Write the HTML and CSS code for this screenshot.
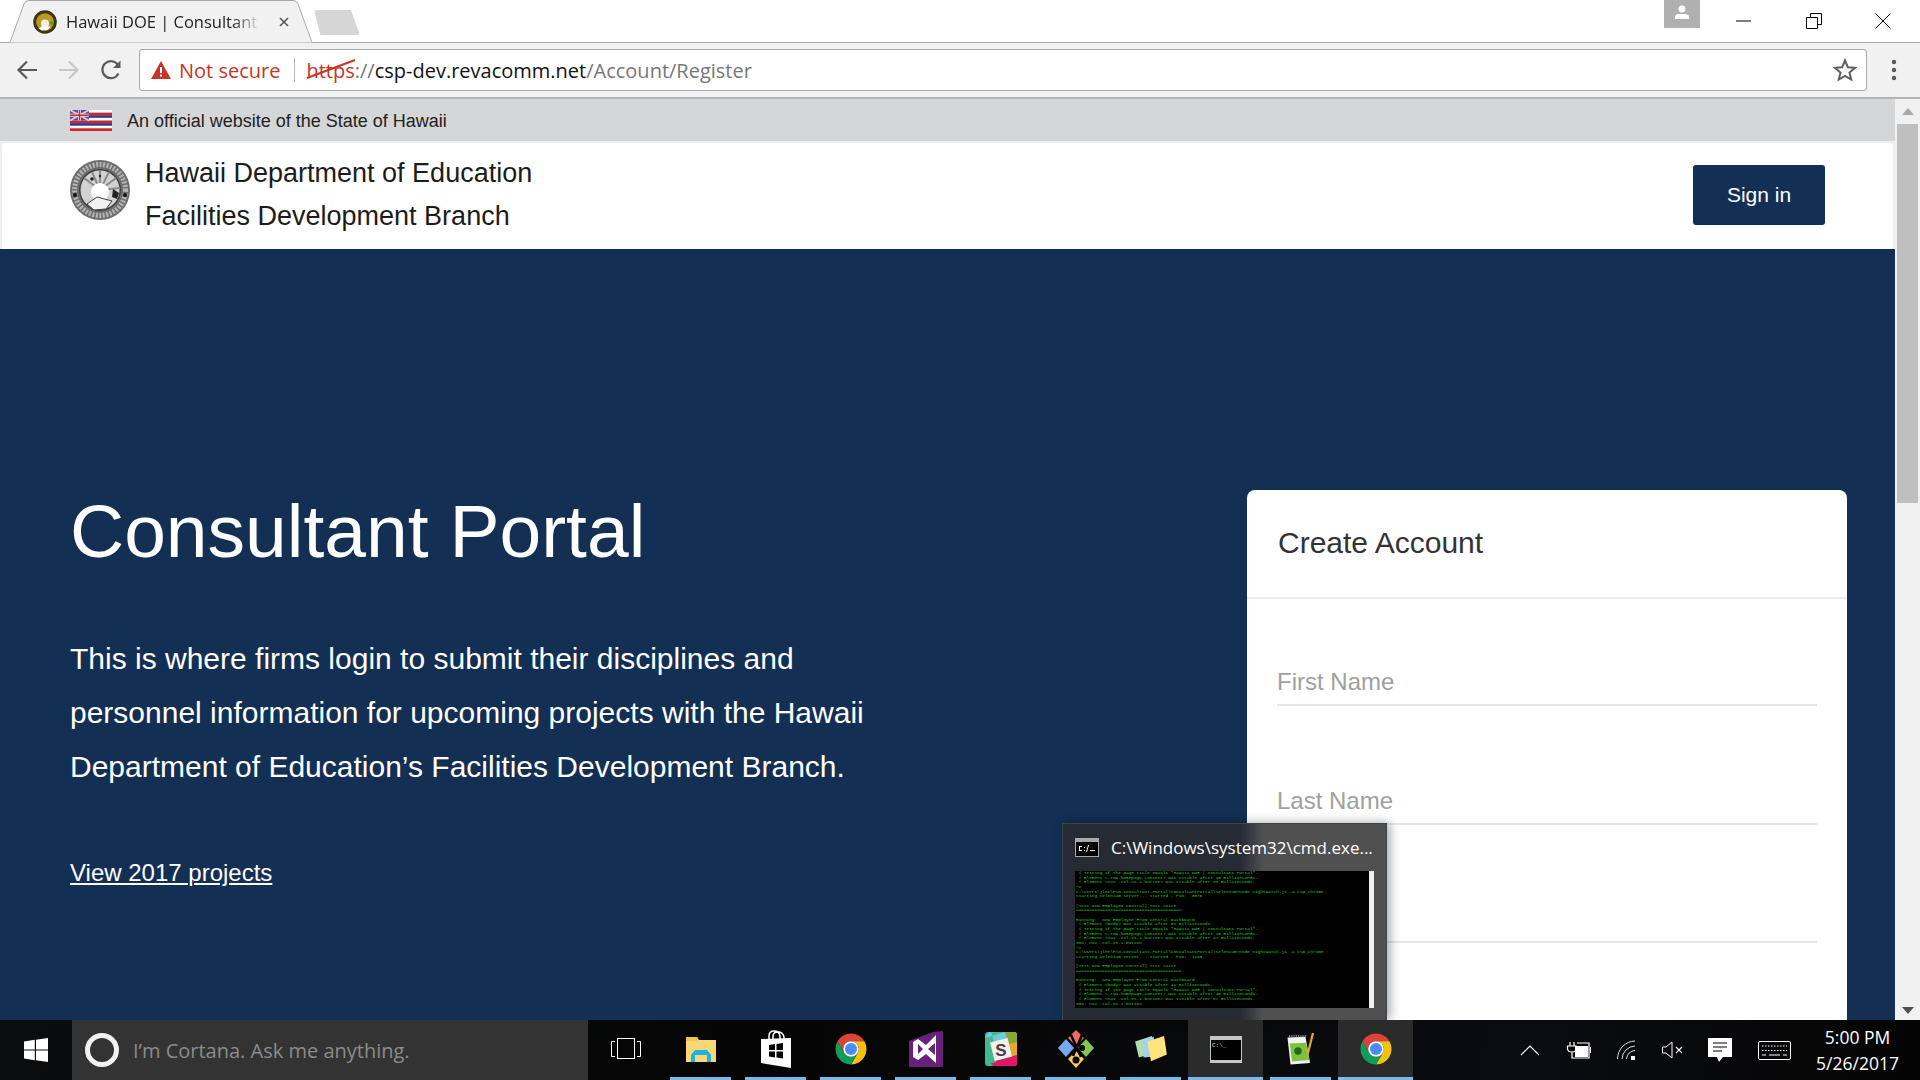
FILE: index.html
```html
<!DOCTYPE html>
<html lang="en">
<head>
    <meta charset="UTF-8">
    <title>Hawaii DOE | Consultant Portal</title>
    <link rel="stylesheet" href="styles.css">
</head>
<body>

	<svg class="defs">
		<symbol id="chrome-logo" viewBox="0 0 48 48">
			<path fill="#db4437" d="M5 13A22 22 0 0 1 43 13H24A11 11 0 0 0 14.5 29.5Z"/>
			<path fill="#f4c20d" d="M43 13A22 22 0 0 1 24 46L33.5 29.5A11 11 0 0 0 24 13Z"/>
			<path fill="#0f9d58" d="M24 46A22 22 0 0 1 5 13L14.5 29.5A11 11 0 0 0 33.5 29.5Z"/>
			<circle cx="24" cy="24" r="11" fill="#fff"/>
			<circle cx="24" cy="24" r="8.5" fill="#4a8bf5"/>
		</symbol>
		<symbol id="seal" viewBox="0 0 60 60">
			<circle cx="30" cy="30" r="30" fill="#6e6e6e"/>
			<circle cx="30" cy="30" r="25.500" fill="none" stroke="#b5b5b5" stroke-width="5" stroke-dasharray="2 1.500"/>
			<circle cx="30" cy="30" r="21" fill="#3f3f3f"/>
			<circle cx="30" cy="30" r="19.500" fill="#d2d2d2"/>
			<path d="M30 30L14 18M30 30L22 12M30 30V10M30 30L39 12M30 30L46 18M30 30L50 28" stroke="#8a8a8a" stroke-width="2"/>
			<circle cx="30" cy="32" r="9" fill="#fff"/>
			<path fill="#f2f2f2" stroke="#444" d="M17 44L27 37 42 41 36 49 24 50Z"/>
			<path fill="#222" d="M43 29L49 33 47 39 42 37Z"/>
			<circle cx="22" cy="19" r="1.800" fill="#222"/>
			<circle cx="30" cy="16" r="1.200" fill="#222"/>
			<circle cx="5" cy="35" r="2" fill="#111"/>
			<circle cx="55" cy="35" r="2" fill="#111"/>
		</symbol>
	</svg>

	<div class="tabstrip">
		<div class="tab">
			<svg class="tab_shape" width="316" height="43" viewBox="0 0 316 43"><path d="M0 42.5H10L24 4Q25 .5 29 .5H293Q297 .5 298 4L312 42.5H316" fill="#f1f1f1" stroke="#a9a9a9"/></svg>
			<svg class="favicon" width="24" height="24" viewBox="0 0 60 60">
				<circle cx="30" cy="30" r="29.5" fill="#3c3413"/>
				<circle cx="30" cy="30" r="22" fill="#b99a22"/>
				<circle cx="30" cy="34" r="10" fill="#f2efdc"/>
				<path fill="#fff" d="M14 46l12-8 18 4-8 8-14 1z"/>
				<circle cx="46" cy="32" r="4" fill="#2f9d3b"/>
			</svg>
			<span class="tab_title">Hawaii DOE | Consultant</span>
			<svg class="tab_close" width="10" height="10" viewBox="0 0 10 10"><path d="M1 1l8 8M9 1l-8 8" stroke="#555" stroke-width="1.6"/></svg>
		</div>
		<div class="newtab"></div>
		<div class="avatar">
			<svg width="18" height="18" viewBox="0 0 18 18"><circle cx="9" cy="5" r="3.4" fill="#fff"/><path d="M2 15v-2q0-3 4-3h6q4 0 4 3v2z" fill="#fff"/></svg>
		</div>
		<div class="winctl">
			<svg width="16" height="16" viewBox="0 0 16 16"><path d="M0 8H15" stroke="#000" stroke-width="1"/></svg>
			<svg width="16" height="16" viewBox="0 0 16 16"><path d="M.5 4.5H11.5V15.5H.5ZM4.500 4.500V.5H15.500V11.500H11.500" fill="none" stroke="#000"/></svg>
			<svg width="16" height="16" viewBox="0 0 16 16"><path d="M.5 .5L15.500 15.500M15.500 .5L.5 15.500" stroke="#000"/></svg>
		</div>
	</div>

	<div class="toolbar">
		<svg class="navicon" width="22" height="22" viewBox="0 0 22 22"><path d="M21 11H3M11 2.500L2.500 11l8.500 8.500" fill="none" stroke="#5a5a5a" stroke-width="2.200"/></svg>
		<svg class="navicon" width="22" height="22" viewBox="0 0 22 22"><path d="M1 11H19M11 2.500L19.500 11 11 19.500" fill="none" stroke="#c8c8c8" stroke-width="2.200"/></svg>
		<svg class="navicon" width="22" height="22" viewBox="0 0 22 22"><path d="M18.500 14.500A8.500 8.500 0 1 1 18 6" fill="none" stroke="#5a5a5a" stroke-width="2.200"/><path d="M20.500 1.500V9H13Z" fill="#5a5a5a"/></svg>
		<div class="omnibox">
			<svg class="warn" width="20" height="18" viewBox="0 0 20 18"><path d="M10 0L20 18H0Z" fill="#c63626"/><path d="M9 6h2v6H9zM9 13.500h2v2H9z" fill="#fff"/></svg>
			<span class="not_secure">Not secure</span>
			<span class="omni_sep"></span>
			<span class="url"><span class="scheme">https<svg class="strike" width="50" height="20" viewBox="0 0 50 20"><path d="M1 19L49 1" stroke="#c63626" stroke-width="2"/></svg></span><span class="url_dim">://</span>csp-dev.revacomm.net<span class="url_dim">/Account/Register</span></span>
			<svg class="star" width="24" height="24" viewBox="0 0 24 24"><path d="M12 2.500l2.800 6.700 7.200.6-5.500 4.700 1.700 7-6.200-3.700-6.200 3.700 1.700-7L2 9.800l7.200-.6z" fill="none" stroke="#5f5f5f" stroke-width="2"/></svg>
		</div>
		<svg class="menu_dots" width="6" height="22" viewBox="0 0 6 22"><circle cx="3" cy="3" r="2.200" fill="#5a5a5a"/><circle cx="3" cy="11" r="2.200" fill="#5a5a5a"/><circle cx="3" cy="19" r="2.200" fill="#5a5a5a"/></svg>
	</div>

	<div class="viewport">
		<div class="page">
			<div class="gov_banner">
				<svg class="flag" width="42" height="21" viewBox="0 0 42 21">
					<rect width="42" height="21" fill="#fff"/>
					<rect y="2.600" width="42" height="2.600" fill="#d3232e"/>
					<rect y="5.200" width="42" height="2.600" fill="#2c3a86"/>
					<rect y="10.500" width="42" height="2.600" fill="#d3232e"/>
					<rect y="13.100" width="42" height="2.600" fill="#2c3a86"/>
					<rect y="18.300" width="42" height="2.700" fill="#d3232e"/>
					<rect width="19" height="10.500" fill="#4a55a0"/>
					<path d="M0 0L19 10.500M19 0L0 10.500" stroke="#efc6cf" stroke-width="1.800"/>
					<path d="M9.500 0V10.500M0 5.250H19" stroke="#e9e3ea" stroke-width="3"/>
					<path d="M9.500 0V10.500M0 5.250H19" stroke="#d3232e" stroke-width="1.500"/>
				</svg>
				<span>An official website of the State of Hawaii</span>
			</div>

			<div class="site_header">
				<svg class="seal" width="60" height="60"><use href="#seal"/></svg>
				<div class="site_name">
					<div>Hawaii Department of Education</div>
					<div>Facilities Development Branch</div>
				</div>
				<button class="sign_in" type="button">Sign in</button>
			</div>

			<div class="hero">
				<div class="hero_text">
					<h1>Consultant Portal</h1>
					<p>This is where firms login to submit their disciplines and<br>personnel information for upcoming projects with the Hawaii<br>Department of Education’s Facilities Development Branch.</p>
					<a href="#" class="hero_link">View 2017 projects</a>
				</div>
				<div class="card">
					<div class="card_title">Create Account</div>
					<div class="card_body">
						<input class="field" type="text" placeholder="First Name">
						<input class="field" type="text" placeholder="Last Name">
						<input class="field" type="text">
					</div>
				</div>
			</div>
		</div>

		<div class="scrollbar">
			<div class="sb_up"></div>
			<div class="sb_thumb"></div>
			<div class="sb_track"></div>
			<div class="sb_down"></div>
		</div>

		<!-- taskbar preview window -->
		<div class="preview">
			<div class="preview_head">
				<svg width="24" height="19" viewBox="0 0 24 19"><rect width="24" height="19" fill="#a9a9a9"/><rect x="1" y="4" width="22" height="14" fill="#000"/><path d="M4 8H7V9H5V12H7V13H4ZM9 9H10V10H9ZM9 12H10V13H9ZM13 7L14 7 12 14H11ZM15 12H20V13H15Z" fill="#fff"/></svg>
				<span>C:\Windows\system32\cmd.exe...</span>
			</div>
			<div class="preview_shot">
<pre class="console"> √ Testing if the page title equals "Hawaii DOE | Consultant Portal".
 √ Element &lt;.row.homepage-content&gt; was visible after 46 milliseconds.
 √ Element &lt;nav .col-xs-1 button&gt; was visible after 33 milliseconds.
^C
C:\Users\jlee\PSD-Consultant-Portal\ConsultantPortal\Selenium&gt;node nightwatch.js -a csp_chrome
Starting selenium server... started - PID:  8576

[Test New Employee Central] Test Suite
========================================

Running:  New Employee From Central Dashboard
 √ Element &lt;body&gt; was visible after 51 milliseconds.
 √ Testing if the page title equals "Hawaii DOE | Consultant Portal".
 √ Element &lt;.row.homepage-content&gt; was visible after 28 milliseconds.
 √ Element &lt;nav .col-xs-1 button&gt; was visible after 47 milliseconds.
30%: nav .col-xs-1 button
^C
C:\Users\jlee\PSD-Consultant-Portal\ConsultantPortal\Selenium&gt;node nightwatch.js -a csp_chrome
Starting selenium server... started - PID:  1168

[Test New Employee Central] Test Suite
========================================

Running:  New Employee From Central Dashboard
 √ Element &lt;body&gt; was visible after 41 milliseconds.
 √ Testing if the page title equals "Hawaii DOE | Consultant Portal".
 √ Element &lt;.row.homepage-content&gt; was visible after 40 milliseconds.
 √ Element &lt;nav .col-xs-1 button&gt; was visible after 67 milliseconds.
30%: nav .col-xs-1 button</pre>
				<div class="console_bar"></div>
			</div>
		</div>
	</div>

	<div class="taskbar">
		<div class="start">
			<svg width="24" height="24" viewBox="0 0 24 24"><path d="M0 3.400L10.800 1.800V11.400H0ZM12 1.700L24 0V11.400H12ZM0 12.600H10.800V22.200L0 20.600ZM12 12.600H24V24L12 22.300Z" fill="#fff"/></svg>
		</div>
		<div class="cortana">
			<span class="cortana_ring"></span>
			<span>I’m Cortana. Ask me anything.</span>
		</div>
		<div class="task_slot">
			<svg width="30" height="22" viewBox="0 0 30 22"><path d="M4 3.500H.5V18.500H4M26 3.500H29.500V18.500H26" fill="none" stroke="#fff"/><rect x="6.500" y=".5" width="17" height="20" fill="none" stroke="#fff"/></svg>
		</div>
		<div class="task_slot running">
			<svg width="32" height="26" viewBox="0 0 32 26"><path d="M1 1H12L14 4H31V26H1Z" fill="#f8d775"/><rect x="1" y="1" width="11" height="4" fill="#eec54b"/><path d="M6 19L10 14H22L26 19V26H22V19H10V26H6Z" fill="#1eb3e8"/></svg>
		</div>
		<div class="task_slot running">
			<svg width="32" height="38" viewBox="0 0 32 38"><path d="M1 9L31 8V38L1 33Z" fill="#fff"/><path d="M9 10V6Q9 1 14 1T20 6V10M13 10V6Q13 2 18 2T24 7V10" fill="none" stroke="#fff" stroke-width="1.500"/><path d="M9 15L15 14V20H9ZM16.500 14L23 13V20H16.500ZM9 21.500H15V27.500L9 26.500ZM16.500 21.500H23V28.500L16.500 27.500Z" fill="#000"/></svg>
		</div>
		<div class="task_slot running">
			<svg width="34" height="34"><use href="#chrome-logo"/></svg>
		</div>
		<div class="task_slot running">
			<svg width="34" height="36" viewBox="0 0 34 36"><path d="M0 10L24 1 34 0V36H0Z" fill="#68217a"/><path d="M27 4V32L17 23 9 29 4 26V11L9 8 17 14ZM9 13V23L14 18ZM26 12L19 18 26 24Z" fill="#fff" fill-rule="evenodd"/></svg>
		</div>
		<div class="task_slot running">
			<svg class="slack" width="32" height="34" viewBox="0 0 32 34">
				<rect width="32" height="34" rx="3" fill="#3eb991"/>
				<path d="M0 6L20 0H4ZM6 0H30L32 4 9 10Z" fill="#70cadb"/>
				<path d="M20 0H29Q32 0 32 3V10L24 12Z" fill="#88a72e"/>
				<path d="M24 12L32 10V24L28 26Z" fill="#e9a820"/>
				<path d="M5 30L32 23V31Q32 34 29 34H8Z" fill="#e01765"/>
				<path d="M0 12L6 10 11 30 4 32 0 30Z" fill="#3eb991"/>
				<rect x="7" y="8" width="18" height="19" fill="#f5f2e8" transform="rotate(-14 16 17)"/>
				<text x="16" y="24" text-anchor="middle" class="slack_s">S</text>
			</svg>
		</div>
		<div class="task_slot running">
			<svg width="36" height="38" viewBox="0 0 36 38">
				<path d="M18 0L26 8 18 16 10 8Z" fill="#f2696a"/>
				<path d="M8 9L16 18 8 27 0 18Z" fill="#74aaf3"/>
				<path d="M28 9L36 18 28 27 20 18Z" fill="#84c655"/>
				<path d="M18 21L26 29 18 38 10 29Z" fill="#f6cf55"/>
				<path d="M13 5L23 27M24 5L15 26" stroke="#000" stroke-width="2.500"/>
				<circle cx="24" cy="18" r="3" fill="#000"/>
				<circle cx="18" cy="30" r="3.500" fill="#000"/>
			</svg>
		</div>
		<div class="task_slot running">
			<svg width="34" height="28" viewBox="0 0 34 30"><path d="M0 7L18 1 21 19 4 24Z" fill="#aee0ae"/><path d="M8 5L20 2 21 23 9 24Z" fill="#a8d0ef"/><path d="M13 7L31 1 34 21 17 28Z" fill="#ffe37d"/></svg>
		</div>
		<div class="task_slot active">
			<svg width="32" height="27" viewBox="0 0 32 27"><rect width="32" height="27" fill="#c6c6c6"/><rect x="1" y="4" width="30" height="20" fill="#000"/><text x="2" y="11" class="cmd_prompt">C:\_</text></svg>
		</div>
		<div class="task_slot running">
			<svg width="34" height="33" viewBox="0 0 36 44">
				<path d="M0 6L24 5 30 40 4 42Z" fill="#f2f2f2"/>
				<path d="M3 14L25 13 29 36 6 38Z" fill="#7fc241"/>
				<circle cx="14" cy="24" r="5" fill="#1f6b1c"/>
				<path d="M2 4H26" stroke="#8a8a8a" stroke-width="3" stroke-dasharray="1.500 1.500"/>
				<path d="M34 0L27 28" stroke="#e8a32e" stroke-width="3"/>
			</svg>
		</div>
		<div class="task_slot active">
			<svg width="34" height="34"><use href="#chrome-logo"/></svg>
		</div>

		<div class="tray">
			<svg width="20" height="12" viewBox="0 0 20 12"><path d="M1 11L10 2 19 11" fill="none" stroke="#fff" stroke-width="1.200"/></svg>
			<svg width="26" height="18" viewBox="0 0 26 18"><path d="M5 1V5M9 1V5M2.500 5H11V8Q11 11 7 11 3 11 2.500 8ZM7 11V17H24V2H12" fill="none" stroke="#fff" stroke-width="1.200"/><rect x="10" y="5" width="13" height="11" fill="#fff"/><rect x="25" y="6" width="1" height="6" fill="#fff"/></svg>
			<svg width="20" height="20" viewBox="0 0 20 20"><path d="M.5 19A18 18 0 0 1 18 1M5 19A13.500 13.500 0 0 1 18 6M9.500 19A9 9 0 0 1 18 10.500" fill="none" stroke="#ddd" stroke-width="1"/><rect x="14" y="16" width="4" height="4" fill="#fff"/></svg>
			<svg width="21" height="18" viewBox="0 0 21 18"><path d="M.5 6H4L10 1V17L4 12H.5Z" fill="none" stroke="#fff"/><path d="M14 6L20 12M20 6L14 12" stroke="#fff" stroke-width="1.100"/></svg>
			<svg width="24" height="24" viewBox="0 0 24 24"><path d="M0 0H24V19H15L11 24 9 19H0Z" fill="#fff"/><path d="M5 5H19M5 9H19M5 13H14" stroke="#000" stroke-width="1.200"/></svg>
			<svg width="33" height="19" viewBox="0 0 33 19"><rect x=".5" y=".5" width="32" height="18" rx="1.500" fill="none" stroke="#fff"/><path d="M4 5H29M4 9.500H29" stroke="#fff" stroke-dasharray="1.500 1.500"/><path d="M4 14H8M11 14H22M25 14H29" stroke="#fff"/></svg>
			<div class="clock">
				<div>5:00 PM</div>
				<div>5/26/2017</div>
			</div>
		</div>
	</div>

</body>
</html>
```

FILE: styles.css
```css
:root {
	--navy: #132f53;
	--chrome-bg: #f1f1f1;
	--chrome-line: #a9a9a9;
	--warn-red: #c63626;
	--task-blue: #76b9ed;
}
* {
	box-sizing: border-box;
}
html, body {
	height: 100%;
}
body {
	margin: 0;
	height: 1080px;
	overflow: hidden;
	display: flex;
	flex-direction: column;
	font-family: "Liberation Sans", Arial, sans-serif;
	background: #000;
}
.defs {
	display: none;
}

/* browser frame */
.tabstrip {
	height: 43px;
	flex: none;
	background: #fff;
	border-bottom: 1px solid var(--chrome-line);
	display: flex;
	align-items: flex-start;
	font-family: "Open Sans", sans-serif;
}
.tab {
	position: relative;
	width: 316px;
	height: 43px;
	display: flex;
	align-items: center;
	padding: 0 0 0 33px;
	flex: none;
}
.tab_shape {
	position: absolute;
	left: 0;
	top: 0;
}
.favicon, .tab_title, .tab_close {
	position: relative;
}
.tab_title {
	margin-left: 9px;
	width: 195px;
	font-size: 16.500px;
	color: #222;
	white-space: nowrap;
	-webkit-mask-image: linear-gradient(90deg, #000 85%, transparent);
	mask-image: linear-gradient(90deg, #000 85%, transparent);
}
.tab_close {
	margin-left: 18px;
}
.newtab {
	width: 46px;
	height: 25px;
	margin: 10px 0 0 -2px;
	background: #d6d6d6;
	clip-path: polygon(0 0, 80% 0, 100% 100%, 14% 100%);
	border-radius: 3px;
	flex: none;
}
.avatar {
	margin-left: auto;
	width: 36px;
	height: 28px;
	background: #b0b0b0;
	display: flex;
	align-items: flex-start;
	justify-content: center;
	padding-top: 4px;
}
.winctl {
	width: 220px;
	display: flex;
	justify-content: space-between;
	padding: 13px 29px 0 36px;
}
.toolbar {
	height: 56px;
	flex: none;
	background: var(--chrome-bg);
	border-bottom: 2px solid #b4b4b4;
	display: flex;
	align-items: center;
	padding: 0 23px 0 16px;
	gap: 20px;
	font-family: "Open Sans", sans-serif;
}
.omnibox {
	flex: 1;
	height: 42px;
	margin-left: -3px;
	margin-right: 4px;
	background: #fff;
	border: 1px solid #a9a9a9;
	border-radius: 3px;
	display: flex;
	align-items: center;
	padding: 0 9px 0 11px;
	font-size: 20px;
}
.warn {
	margin-right: 8px;
}
.not_secure {
	color: var(--warn-red);
}
.omni_sep {
	width: 1px;
	height: 24px;
	background: #b5b5b5;
	margin: 0 11px 0 14px;
}
.url {
	color: #111;
}
.scheme {
	position: relative;
	color: var(--warn-red);
}
.strike {
	position: absolute;
	left: 0;
	top: 2px;
}
.url_dim {
	color: #777;
}
.star {
	margin-left: auto;
}
.menu_dots {
	flex: none;
}

/* page */
.viewport {
	position: relative;
	flex: 1;
	min-height: 0;
	display: flex;
}
.page {
	flex: 1;
	min-width: 0;
	overflow: hidden;
	background: #efefef;
	display: flex;
	flex-direction: column;
}
.gov_banner {
	height: 42px;
	flex: none;
	background: #d5d6d8;
	display: flex;
	align-items: center;
	padding: 2px 0 0 70px;
	gap: 15px;
	font-size: 18px;
	color: #222;
}
.flag {
	margin-top: -2px;
}
.site_header {
	height: 106px;
	flex: none;
	margin: 2px 2px 0 2px;
	background: #fff;
	border-radius: 4px 4px 0 0;
	display: flex;
	align-items: center;
	padding: 0 68px 2px 68px;
}
.seal {
	flex: none;
	margin-top: -10px;
	filter: blur(0.5px);
}
.site_name {
	margin-left: 15px;
	font-size: 27px;
	line-height: 43px;
	color: #1c1c1c;
}
.sign_in {
	margin-left: auto;
	width: 132px;
	height: 60px;
	background: var(--navy);
	color: #fff;
	border: 0;
	border-radius: 3px;
	font: 21px "Liberation Sans", Arial, sans-serif;
}
.hero {
	flex: 1;
	background: var(--navy);
	display: flex;
	justify-content: space-between;
	padding: 241px 48px 0 70px;
	color: #fff;
}
h1 {
	margin: -1px 0 0;
	font-size: 75px;
	font-weight: normal;
	line-height: 84px;
}
.hero_text p {
	margin: 59px 0 0;
	font-size: 30px;
	line-height: 54px;
}
.hero_link {
	display: inline-block;
	margin-top: 65px;
	font-size: 24px;
	color: #fff;
}
.card {
	width: 600px;
	height: 900px;
	background: #fff;
	border-radius: 8px 8px 0 0;
	color: #333;
}
.card_title {
	height: 109px;
	padding: 0 31px;
	font-size: 30px;
	line-height: 106px;
	border-bottom: 2px solid #eceef1;
}
.card_body {
	padding: 0 30px;
	display: flex;
	flex-direction: column;
}
.field {
	height: 50px;
	margin-top: 69px;
	padding: 3px 0 0;
	border: 0;
	border-bottom: 2px solid #e6e6e6;
	outline: 0;
	font: 24px "Liberation Sans", Arial, sans-serif;
	background: transparent;
}
.field:first-child {
	margin-top: 57px;
}
.field:last-child {
	margin-top: 68px;
}
.field::placeholder {
	color: #a0a0a0;
}
.scrollbar {
	width: 25px;
	flex: none;
	background: var(--chrome-bg);
	display: flex;
	flex-direction: column;
	align-items: center;
}
.sb_up, .sb_down {
	width: 0;
	height: 0;
	border-left: 6px solid transparent;
	border-right: 6px solid transparent;
	flex: none;
}
.sb_up {
	margin-top: 9px;
	border-bottom: 7px solid #a8a8a8;
}
.sb_down {
	margin-bottom: 6px;
	border-top: 7px solid #505050;
}
.sb_thumb {
	width: 21px;
	height: 379px;
	margin-top: 9px;
	background: #bfbfbf;
	flex: none;
}
.sb_track {
	flex: 1;
}

/* window preview over the page */
.preview {
	position: absolute;
	left: 1062px;
	bottom: 0;
	width: 325px;
	height: 197px;
	padding: 0 12px;
	background: linear-gradient(90deg, #262b33 55%, #505050 62%);
	border: 1px solid #3a4350;
	border-bottom: 0;
	box-shadow: 3px 0 10px rgba(0, 0, 0, 0.35);
	color: #fff;
	font-family: "Open Sans", sans-serif;
}
.preview_head {
	height: 47px;
	display: flex;
	align-items: center;
	gap: 12px;
	font-size: 17px;
	white-space: nowrap;
}
.preview_head svg {
	flex: none;
}
.preview_shot {
	position: relative;
	height: 137px;
	width: 299px;
	background: #000;
	overflow: hidden;
}
.console {
	margin: 0;
	padding: 0 0 0 1px;
	font: 4.400px/4.670px "Liberation Mono", monospace;
	color: #1fd11f;
}
.console_bar {
	position: absolute;
	right: 0;
	top: 0;
	bottom: 0;
	width: 5px;
	background: #f0f0f0;
}

/* windows taskbar */
.taskbar {
	height: 60px;
	flex: none;
	display: flex;
	background: linear-gradient(100deg, #0a0c0e, #050505 40%, #0b0c0f 80%, #040404);
	color: #fff;
	font-family: "Open Sans", sans-serif;
}
.start {
	width: 72px;
	display: flex;
	align-items: center;
	justify-content: center;
}
.cortana {
	width: 516px;
	background: #333;
	display: flex;
	align-items: center;
	padding-left: 13px;
	gap: 14px;
	font-size: 20px;
	color: #8b8b8b;
}
.cortana_ring {
	width: 34px;
	height: 34px;
	border-radius: 50%;
	border: 5px solid #f2f2f2;
	flex: none;
}
.task_slot {
	width: 75px;
	height: 60px;
	flex: none;
	display: flex;
	align-items: center;
	justify-content: center;
	padding-bottom: 2px;
	position: relative;
}
.task_slot.running::after, .task_slot.active::after {
	content: "";
	position: absolute;
	bottom: 0;
	left: 7px;
	right: 7px;
	height: 3px;
	background: var(--task-blue);
}
.task_slot.active {
	background: #2b2b2b;
}
.task_slot.active::after {
	left: 0;
	right: 0;
}
.slack_s {
	font: bold 17px "Liberation Sans", sans-serif;
	fill: #4d394b;
}
.cmd_prompt {
	font: 6px "Liberation Mono", monospace;
	fill: #ddd;
}
.tray {
	flex: 1;
	display: flex;
	align-items: center;
	justify-content: space-between;
	padding: 0 21px 0 107px;
}
.clock {
	font-size: 17.500px;
	line-height: 26px;
	text-align: center;
}
```
